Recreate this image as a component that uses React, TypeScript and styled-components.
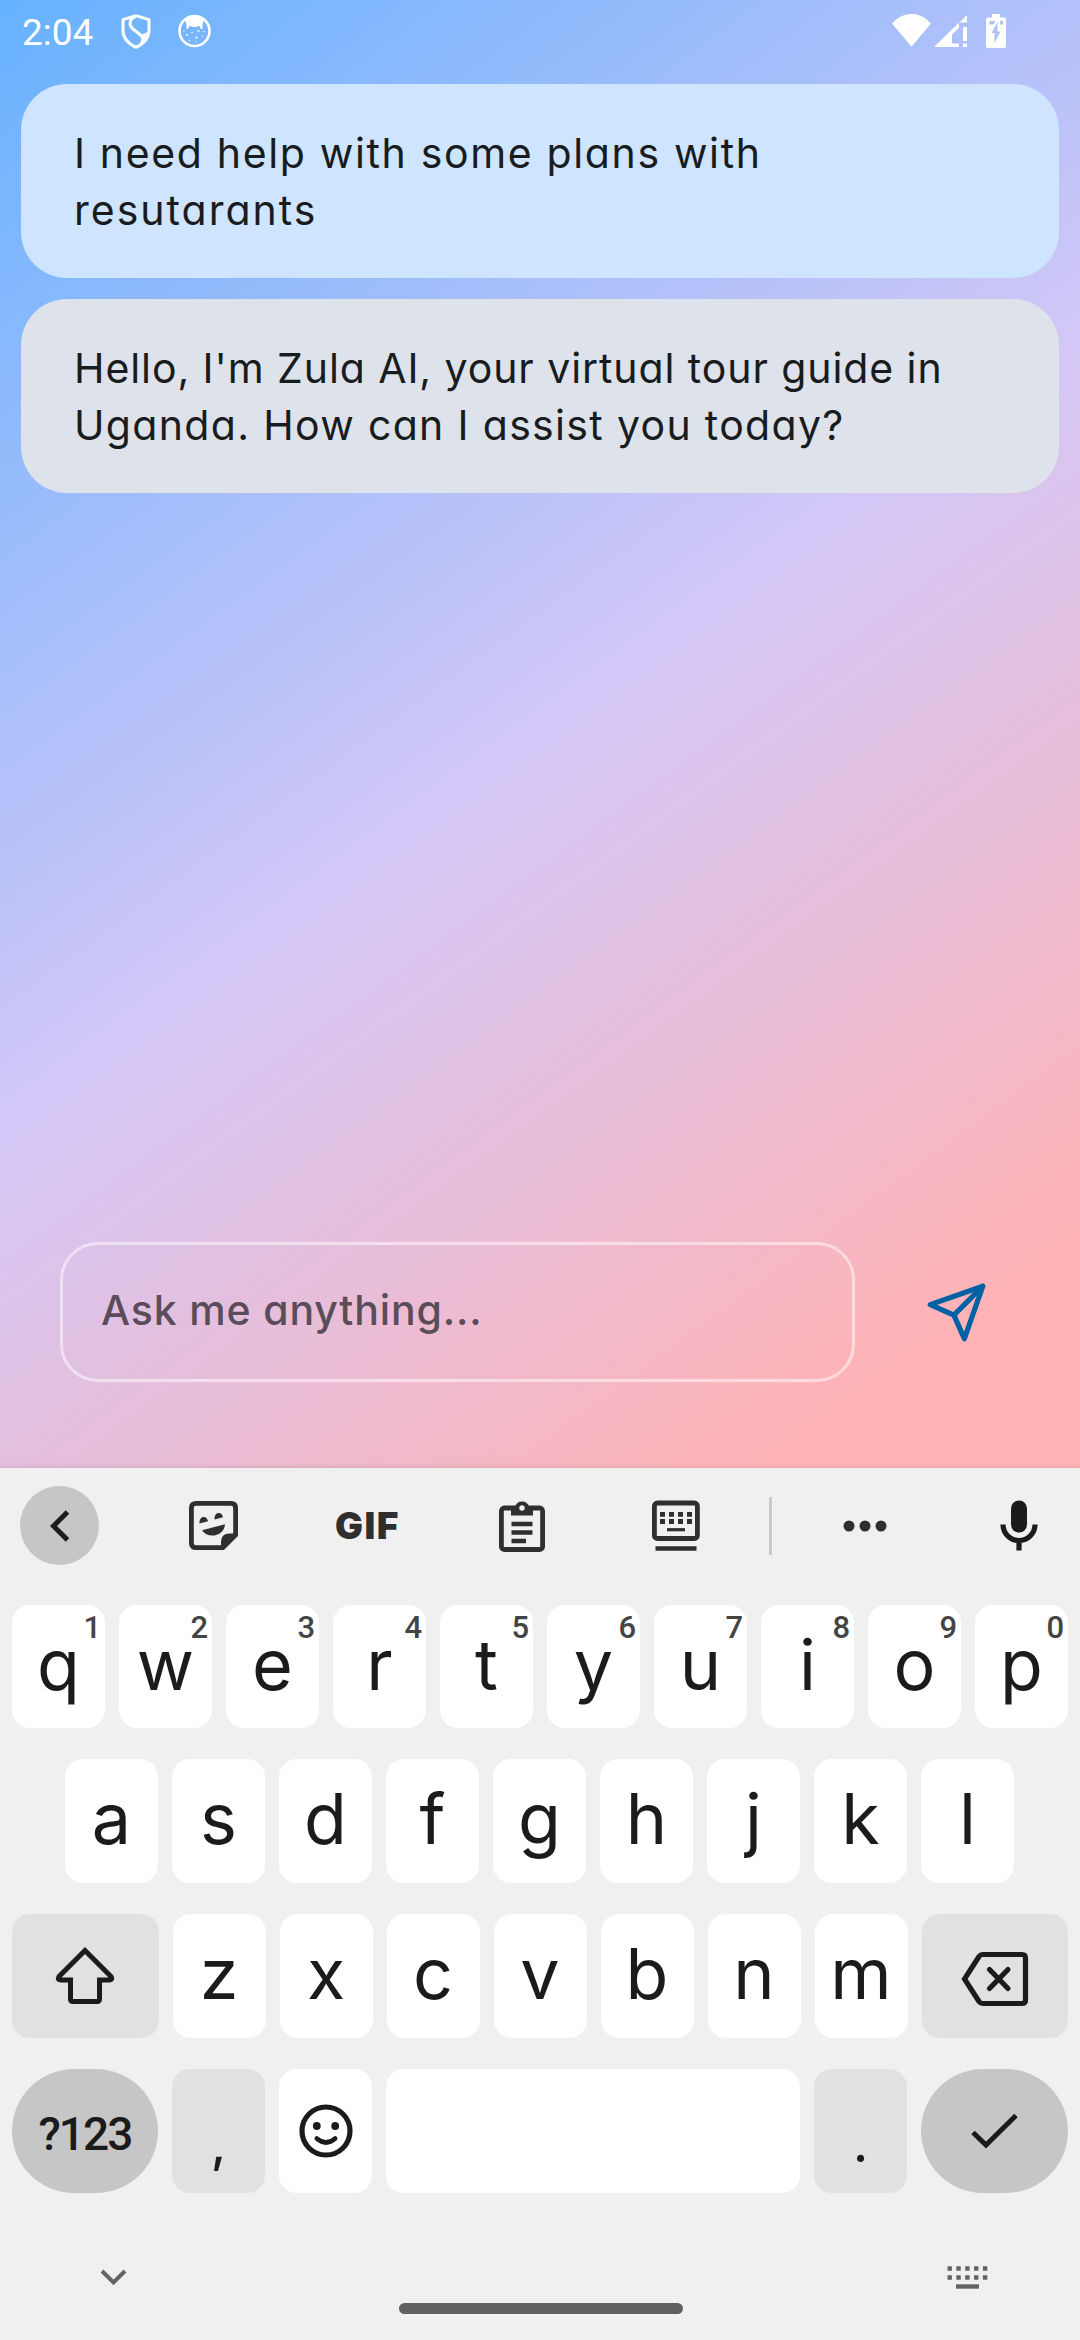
import React from 'react';
import styled, { createGlobalStyle } from 'styled-components';

const GlobalStyle = createGlobalStyle`
  * { box-sizing: border-box; }
  body { margin: 0; background: #f0f0f0; }
`;

const Screen = styled.div`
  width: 1080px;
  height: 2340px;
  display: flex;
  flex-direction: column;
  overflow: hidden;
  font-family: Inter, 'Noto Sans', sans-serif;
`;

const Chat = styled.main`
  height: 1468px;
  display: flex;
  flex-direction: column;
  background: linear-gradient(143.66deg, #66b2ff 0%, #d3c7f7 50%, #ffb3b5 90%);
`;

const StatusBar = styled.header`
  height: 84px;
  padding: 14px 74px 0 22px;
  display: flex;
  align-items: flex-start;
  justify-content: space-between;
  color: #fff;
`;

const StatusGroup = styled.div`
  display: flex;
  align-items: flex-start;
`;

const Clock = styled.span`
  width: 99px;
  font: 400 37px/38px Roboto, sans-serif;
`;

const StatusIcon = styled.svg<{ $gap?: number }>`
  display: block;
  flex: none;
  margin-left: ${(p) => p.$gap ?? 0}px;
`;

const Messages = styled.section`
  flex: 1;
  padding: 0 21px;
  display: flex;
  flex-direction: column;
  gap: 21px;
`;

const Bubble = styled.p<{ $tone: 'user' | 'bot' }>`
  margin: 0;
  height: 194px;
  padding: 41px 53px;
  border-radius: 46px;
  background: ${(p) => (p.$tone === 'user' ? '#cee4ff' : '#dee2ea')};
  color: #191c1e;
  font-size: 41px;
  line-height: 57px;
  font-feature-settings: 'cv11' 1;
`;

const Line = styled.span<{ $tracking: number }>`
  display: block;
  white-space: nowrap;
  letter-spacing: ${(p) => p.$tracking}px;
`;

const Composer = styled.div`
  height: 226px;
  padding: 0 92px 86px 60px;
  display: flex;
  align-items: center;
  justify-content: space-between;
`;

const Field = styled.div`
  width: 795px;
  height: 140px;
  padding: 0 38px 4px;
  display: flex;
  align-items: center;
  border: 3px solid rgba(255, 255, 255, 0.5);
  border-radius: 38px;
  color: #5b4c59;
  font-size: 41px;
  font-weight: 500;
  letter-spacing: 0.85px;
  font-feature-settings: 'cv11' 1;
`;

const Keyboard = styled.section`
  position: relative;
  height: 872px;
  display: flex;
  flex-direction: column;
  background: #f0f0f0;
  color: #1b1b1b;
  box-shadow: 0 -1px 5px rgba(0, 0, 0, 0.1);
`;

const Toolbar = styled.div`
  height: 137px;
  padding: 18px 20px 40px;
  display: flex;
  align-items: center;
  color: #2f2f2f;
`;

const ToolGroup = styled.div`
  display: flex;
  gap: 75px;
`;

const Tool = styled.button<{ $filled?: boolean }>`
  width: 79px;
  height: 79px;
  padding: 0;
  border: 0;
  border-radius: 50%;
  display: flex;
  align-items: center;
  justify-content: center;
  color: inherit;
  background: ${(p) => (p.$filled ? '#c6c6c6' : 'transparent')};
`;

const GifLabel = styled.span`
  font: 900 37px/40px Inter, sans-serif;
  letter-spacing: 1.6px;
`;

const Divider = styled.i`
  width: 3px;
  height: 58px;
  margin: 0 53px 0 54px;
  background: #cacaca;
`;

const Rows = styled.div`
  display: flex;
  flex-direction: column;
  gap: 31px;
`;

const Row = styled.div<{ $inset?: number; $height?: number }>`
  height: ${(p) => p.$height ?? 124}px;
  padding: 0 ${(p) => p.$inset ?? 12}px;
  display: flex;
  gap: 14px;
`;

const BottomGrid = styled(Row)`
  display: grid;
  grid-template-columns: 146px 93px 93px 414px 93px 147px;
`;

const tones = { letter: '#fff', soft: '#e1e1e1', strong: '#c6c6c6' };

const Key = styled.button<{ $tone?: keyof typeof tones; $wide?: boolean; $icon?: boolean }>`
  position: relative;
  flex: ${(p) => (p.$wide ? 1 : '0 0 93px')};
  padding: ${(p) => (p.$icon ? '0' : '0 0 4px')};
  border: 0;
  border-radius: ${(p) => (p.$tone === 'strong' ? 62 : 18)}px;
  display: flex;
  align-items: center;
  justify-content: center;
  background: ${(p) => tones[p.$tone ?? 'letter']};
  color: #1b1b1b;
  font: 400 70px/84px Inter, sans-serif;
`;

const BackspaceKey = styled(Key)`
  padding-top: 5px;
`;

const Hint = styled.span`
  position: absolute;
  top: 6px;
  right: 4px;
  color: #444;
  font: 500 31px/34px Roboto, sans-serif;
`;

const ModeLabel = styled.span`
  padding-top: 10px;
  font: 500 46px/60px Roboto, sans-serif;
  letter-spacing: -1.9px;
`;

const Punctuation = styled.span`
  padding-top: 30px;
  font: 500 50px/60px Inter, sans-serif;
`;

const NavBar = styled.footer`
  flex: 1;
  padding: 0 92px 26px 100px;
  display: flex;
  align-items: flex-end;
  justify-content: space-between;
  color: #646464;
`;

const NavIcon = styled.svg<{ $lift: number }>`
  display: block;
  margin-bottom: ${(p) => p.$lift}px;
`;

const HomeHandle = styled.div`
  width: 284px;
  height: 11px;
  margin-left: 7px;
  border-radius: 6px;
  background: #606060;
`;

const Shield = () => (
  <StatusIcon width="30" height="35" viewBox="0 0 30 35" fill="none" stroke="currentColor" strokeWidth="3" strokeLinejoin="round">
    <path d="M15 1.600 28 5.600V16c0 8-6 14-13 17.300C8 30 2 24 2 16V5.600Z" />
    <path d="M14.500 2.500C8.500 4.500 7.500 11 11.500 14.500l8.500 7c2.500 2.500 2.500 4.500 0 8.500" />
    <path d="M21 20.500 27 18l-3.500 7.500-2.500 2Z" fill="currentColor" stroke="none" />
  </StatusIcon>
);

const CatBadge = () => (
  <StatusIcon $gap={27} width="33" height="34" viewBox="0 0 33 34">
    <circle cx="16.500" cy="17" r="15" fill="none" stroke="currentColor" strokeWidth="2.600" />
    <path d="M7 5.500Q16.500-2 26 5.500L24.500 10.500V15h-1.600l-1.700-3.200q-4.700 2.500-9.400 0L10 15H8.500V10.500Z" fill="currentColor" />
    <g fill="currentColor">
      <circle cx="9" cy="21" r="1" />
      <circle cx="14" cy="18.500" r=".8" />
      <circle cx="20.500" cy="17" r="1" />
      <circle cx="18.500" cy="23.500" r="1.100" />
      <circle cx="11.500" cy="26.500" r=".8" />
      <circle cx="24.500" cy="22" r=".8" />
      <circle cx="18" cy="28" r=".7" />
      <circle cx="26" cy="17.500" r=".7" />
      <circle cx="6" cy="17" r=".7" />
    </g>
  </StatusIcon>
);

const Wifi = () => (
  <StatusIcon width="39" height="33" viewBox="0 0 39 33" fill="currentColor">
    <path d="M0 9.500Q8 0 19.500 0T39 9.500L19.500 32.800Z" />
  </StatusIcon>
);

const Signal = () => (
  <StatusIcon $gap={3} width="33" height="34" viewBox="0 0 33 34" fill="currentColor">
    <path d="M33 1v7.500h-7.500ZM0 33 25 8.500V14l-7 6.500v9h7V33Z" />
    <path d="M29 13h4v14h-4zM29 29.500h4V33h-4z" />
  </StatusIcon>
);

const Battery = () => (
  <StatusIcon $gap={19} width="20" height="34" viewBox="0 0 20 34">
    <path fill="currentColor" fillRule="evenodd" d="M6 0h8v3.500h4q2 0 2 2V32q0 2-2 2H2q-2 0-2-2V5.500q0-2 2-2h4ZM3.500 7v3.500h4L9.500 7Zm10.500 0v3.500h3V7ZM11.500 8 5.500 19h3v10l6-11.500h-3Z" />
  </StatusIcon>
);

const Send = () => (
  <svg width="63" height="63" viewBox="0 0 24 24" fill="none" stroke="#0061a4" strokeWidth="2" strokeLinecap="round" strokeLinejoin="round">
    <path d="M22 2 15 22l-4-9-9-4Z" />
    <path d="M22 2 11 13" />
  </svg>
);

const Back = () => (
  <svg width="20" height="32" viewBox="0 0 20 32" fill="none" stroke="#1b1b1b" strokeWidth="5">
    <path d="M17.500 2 3.500 16l14 14" />
  </svg>
);

const Sticker = () => (
  <svg width="49" height="49" viewBox="0 0 49 49">
    <path d="M7 2.400h35q4.600 0 4.600 4.600v27L34 46.600H7q-4.600 0-4.600-4.600V7Q2.400 2.400 7 2.400Z" fill="none" stroke="currentColor" strokeWidth="4.800" />
    <path d="M48 32.500V34L34 48.500h-2V41q0-8.500 8.500-8.500ZM10.500 22.500c-.5-8 7.500-8.500 8.500-2.200ZM25.500 18.500c-.5-8 7.500-8.500 8.500-2.200ZM13 29.300 36 23.300c-1 13-18 14.500-23 6Z" fill="currentColor" />
  </svg>
);

const Clipboard = () => (
  <svg width="46" height="52" viewBox="0 0 46 52">
    <rect x="2.400" y="8" width="41.200" height="41.500" rx="3" fill="none" stroke="currentColor" strokeWidth="4.800" />
    <path d="M12 15.500V7h4a7.200 7.200 0 0 1 14 0h4v8.500Z" fill="currentColor" />
    <circle cx="23" cy="8" r="2.700" fill="#f0f0f0" />
    <path d="M12.500 24h21M12.500 32.500h21M12.500 41h14.500" stroke="currentColor" strokeWidth="4.400" />
  </svg>
);

const FloatingBoard = () => (
  <svg width="48" height="52" viewBox="0 0 48 52" stroke="currentColor" fill="none" strokeWidth="4.800">
    <rect x="2.400" y="3" width="43" height="35.500" rx="3" />
    <path d="M8 14.300h33M8 21.500h33" strokeDasharray="5 4" />
    <path d="M15 29.700h18" strokeWidth="3.200" />
    <path d="M3.500 48.500h41" strokeWidth="4.400" />
  </svg>
);

const More = () => (
  <svg width="44" height="12" viewBox="0 0 44 12" fill="currentColor">
    <circle cx="6" cy="6" r="5.500" />
    <circle cx="22" cy="6" r="5.500" />
    <circle cx="38" cy="6" r="5.500" />
  </svg>
);

const Mic = () => (
  <svg width="38" height="51" viewBox="0 0 38 51">
    <rect x="11" y="0.500" width="16" height="32" rx="8" fill="#1b1b1b" />
    <path d="M3 24.500a16 16 0 0 0 32 0M19 40.500v10" fill="none" stroke="#1b1b1b" strokeWidth="5.200" />
  </svg>
);

const Shift = () => (
  <svg width="60" height="60" viewBox="0 0 60 60" fill="none" stroke="currentColor" strokeWidth="5">
    <path d="M30 4.500 4 30.500q-2 3.500 1.500 3.500H15.500v19q0 2.500 2.500 2.500h24q2.500 0 2.500-2.500V34h10q3.500 0 1.500-3.500Z" />
  </svg>
);

const Backspace = () => (
  <svg width="68" height="56" viewBox="0 0 68 56" fill="none" stroke="currentColor" strokeWidth="5.200" strokeLinecap="round">
    <path d="M21.500 3.500H61q3.500 0 3.500 3.500v42q0 3.500-3.500 3.500H21.500q-2 0-3.500-2L3.500 28 18 5.500q1.500-2 3.500-2Z" />
    <path d="m28.500 18.500 18.500 19M47 18.500l-18.500 19" />
  </svg>
);

const Smile = () => (
  <svg width="54" height="54" viewBox="0 0 54 54">
    <circle cx="27" cy="27" r="24" fill="none" stroke="currentColor" strokeWidth="5.200" />
    <circle cx="17.800" cy="22" r="3.900" fill="currentColor" />
    <circle cx="36.200" cy="22" r="3.900" fill="currentColor" />
    <path d="M17.800 34.500q9.200 8 18.400 0" fill="none" stroke="currentColor" strokeWidth="4.600" strokeLinecap="round" />
  </svg>
);

const Check = () => (
  <svg width="47" height="36" viewBox="0 0 47 36" fill="none" stroke="currentColor" strokeWidth="5">
    <path d="m2 19.500 13 12.500L45 2.500" />
  </svg>
);

const numberRow = 'qwertyuiop'.split('');
const homeRow = 'asdfghjkl'.split('');
const lowerRow = 'zxcvbnm'.split('');

export default function App() {
  return (
    <>
      <GlobalStyle />
      <Screen>
        <Chat>
          <StatusBar>
            <StatusGroup>
              <Clock>2:04</Clock>
              <Shield />
              <CatBadge />
            </StatusGroup>
            <StatusGroup>
              <Wifi />
              <Signal />
              <Battery />
            </StatusGroup>
          </StatusBar>
          <Messages>
            <Bubble $tone="user">
              <Line $tracking={1.65}>I need help with some plans with</Line>
              <Line $tracking={2}>resutarants</Line>
            </Bubble>
            <Bubble $tone="bot">
              <Line $tracking={0.92}>Hello, I'm Zula AI, your virtual tour guide in</Line>
              <Line $tracking={1.33}>Uganda. How can I assist you today?</Line>
            </Bubble>
          </Messages>
          <Composer>
            <Field>Ask me anything...</Field>
            <Send />
          </Composer>
        </Chat>
        <Keyboard>
          <Toolbar>
            <ToolGroup>
              <Tool $filled><Back /></Tool>
              <Tool><Sticker /></Tool>
              <Tool><GifLabel>GIF</GifLabel></Tool>
              <Tool><Clipboard /></Tool>
              <Tool><FloatingBoard /></Tool>
            </ToolGroup>
            <Divider />
            <ToolGroup>
              <Tool><More /></Tool>
              <Tool><Mic /></Tool>
            </ToolGroup>
          </Toolbar>
          <Rows>
            <Row $height={123}>
              {numberRow.map((letter, i) => (
                <Key key={letter}>
                  {letter}
                  <Hint>{(i + 1) % 10}</Hint>
                </Key>
              ))}
            </Row>
            <Row $inset={65}>
              {homeRow.map((letter) => (
                <Key key={letter}>{letter}</Key>
              ))}
            </Row>
            <Row>
              <Key $tone="soft" $wide $icon><Shift /></Key>
              {lowerRow.map((letter) => (
                <Key key={letter}>{letter}</Key>
              ))}
              <BackspaceKey $tone="soft" $wide $icon><Backspace /></BackspaceKey>
            </Row>
            <BottomGrid>
              <Key $tone="strong"><ModeLabel>?123</ModeLabel></Key>
              <Key $tone="soft"><Punctuation>,</Punctuation></Key>
              <Key $icon><Smile /></Key>
              <Key aria-label="space" />
              <Key $tone="soft"><Punctuation>.</Punctuation></Key>
              <Key $tone="strong" $icon><Check /></Key>
            </BottomGrid>
          </Rows>
          <NavBar>
            <NavIcon $lift={27} width="27" height="19" viewBox="0 0 27 19" fill="none" stroke="currentColor" strokeWidth="4">
              <path d="M2 3l11.500 11.500L25 3" />
            </NavIcon>
            <HomeHandle />
            <NavIcon $lift={25} width="41" height="23" viewBox="0 0 41 23" fill="none" stroke="currentColor" strokeWidth="4.400">
              <path d="M.5 2.500h40M.5 11.500h40" strokeDasharray="4.400 4.450" />
              <path d="M9 20.500h23" />
            </NavIcon>
          </NavBar>
        </Keyboard>
      </Screen>
    </>
  );
}
